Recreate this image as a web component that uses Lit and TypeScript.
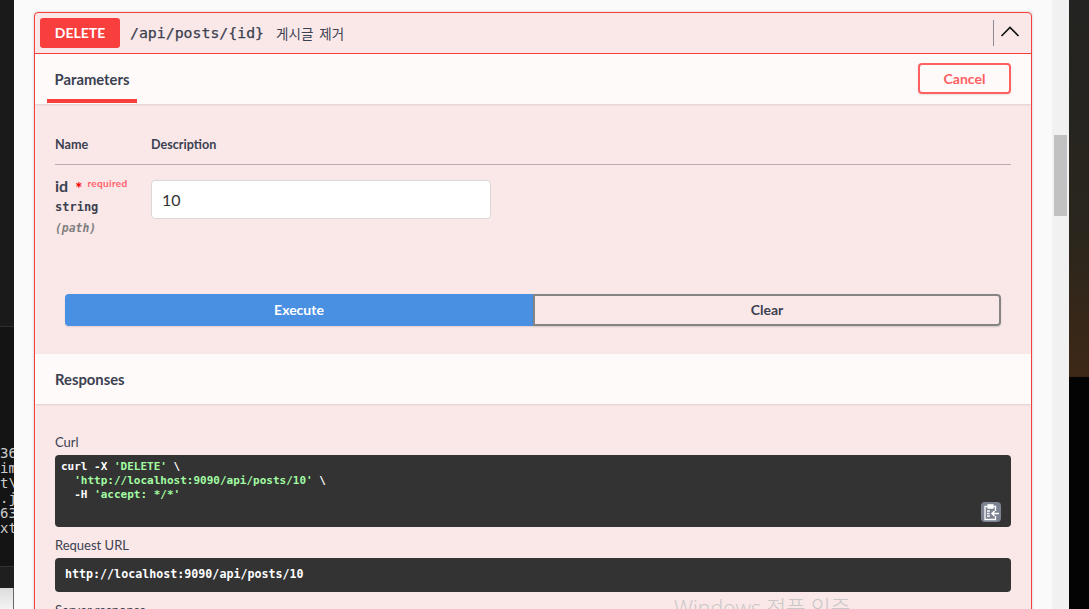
import { LitElement, html, css } from "lit";
import { customElement } from "lit/decorators.js";

@customElement("app-root")
export class AppRoot extends LitElement {
  static styles = css`
    :host { display: block; width: 1089px; height: 609px; overflow: hidden; position: relative; background: #fafafa; font-family: Lato, "Noto Sans CJK KR", sans-serif; color: #3b4151; }
    .shell { display: grid; grid-template-columns: 14px 1fr 17px 20px; grid-template-rows: 609px; height: 609px; }
    .term { background: #1a1a1a; position: relative; font: 14px/15px "DejaVu Sans Mono", monospace; color: #ccc; overflow: hidden; }
    .term .low { position: absolute; top: 326px; left: 0; right: 0; height: 240px; background: #141414; border-top: 1px solid #2e2e2e; box-sizing: border-box; }
    .term .lines { position: absolute; top: 446px; left: 0; white-space: pre; }
    .term .rule2 { position: absolute; top: 566px; left: 0; right: 0; height: 22px; background: #1f1f1f; border-top: 1px solid #333; box-sizing: border-box; }
    .term .foot { position: absolute; top: 588px; left: 0; right: 0; bottom: 0; background: linear-gradient(180deg, #dcdcdc, #f4f4f4); border-right: 1px solid #666; }
    .page { background: #fafafa; padding: 12px 20px 0 20px; min-width: 0; min-height: 0; }
    .track { background: #f1f1f1; position: relative; }
    .thumb { position: absolute; top: 135px; left: 2px; width: 13px; height: 81px; background: #c1c1c1; }
    .wall { background: linear-gradient(180deg, #232321 0%, #2a261d 38%, #3e2816 61.8%, #030303 62%); }
    .op { border: 1px solid #f93e3e; border-radius: 4px; background: #fae7e7; box-shadow: 0 0 3px rgba(0,0,0,.19); height: 640px; }
    .sum { display: flex; align-items: center; height: 40px; border-bottom: 1px solid #f93e3e; padding: 0 5px; }
    .method { width: 80px; height: 30px; border-radius: 3px; background: #f93e3e; color: #fff; font-size: 14px; font-weight: 700; line-height: 30px; text-align: center; }
    .path { margin-left: 10px; font: 400 14.85px "DejaVu Sans Mono", monospace; -webkit-text-stroke: .25px #3b4151; }
    .desc { margin-left: 12px; font: 13.5px "Noto Sans CJK KR", sans-serif; word-spacing: 3px; }
    .spacer { flex: 1; }
    .divider { width: 1px; height: 26px; background: #8a8a99; margin-right: 6px; }
    .chev { width: 20px; height: 20px; margin-right: 6px; display: block; }
    .tabbar { display: flex; justify-content: space-between; height: 50px; background: rgba(255,255,255,.8); box-shadow: 0 1px 2px rgba(0,0,0,.1); padding: 0 20px 0 12px; }
    .tab { width: 90px; height: 49px; border-bottom: 4px solid #f93e3e; box-sizing: border-box; text-align: center; font-size: 14.8px; font-weight: 700; line-height: 51px; }
    .cancel { width: 93px; height: 31px; margin-top: 9px; border: 2px solid #ff6060; border-radius: 4px; box-sizing: border-box; color: #ff6060; font-size: 14px; font-weight: 700; line-height: 27px; text-align: center; box-shadow: 0 1px 2px rgba(0,0,0,.1); }
    .params { padding: 0 20px; }
    .thead { display: grid; grid-template-columns: 96px 1fr; height: 60px; border-bottom: 1px solid rgba(59,65,81,.35); font-size: 12.6px; font-weight: 700; line-height: 20px; padding-top: 30px; box-sizing: border-box; margin-top: 1px; }
    .row { display: grid; grid-template-columns: 96px 340px; padding-top: 15px; height: 129px; box-sizing: border-box; }
    .pname { font-size: 16px; font-weight: 700; line-height: 12px; display: flex; align-items: baseline; }
    .star { color: #f00; font-size: 17px; margin-left: 7px; position: relative; top: 3px; }
    .req { color: #ff5f6d; font-size: 10px; font-weight: 700; margin-left: 5px; position: relative; top: -5px; letter-spacing: .35px; }
    .ptype { font: 700 12px/20px "DejaVu Sans Mono", monospace; margin-top: 3px; }
    .ploc { font: italic 700 11.4px/18px "DejaVu Sans Mono", monospace; color: #808080; margin-top: 2px; }
    .input { height: 39px; background: #fff; border: 1px solid #d9d9d9; border-radius: 4px; box-sizing: border-box; font-size: 16px; line-height: 37px; padding-left: 10px; color: #333; }
    .btns { display: grid; grid-template-columns: 1fr 1fr; margin: 0 30px; height: 30px; }
    .exec { background: #4990e2; color: #fff; font-size: 14px; font-weight: 700; line-height: 31px; text-align: center; border-radius: 4px 0 0 4px; box-shadow: 0 1px 2px rgba(0,0,0,.1); }
    .clear { border: 2px solid #858585; border-radius: 0 4px 4px 0; box-sizing: border-box; font-size: 14px; font-weight: 700; line-height: 28px; text-align: center; box-shadow: 0 1px 2px rgba(0,0,0,.15); }
    .resp-head { margin-top: 30px; height: 50px; background: rgba(255,255,255,.8); box-shadow: 0 1px 2px rgba(0,0,0,.1); padding-left: 20px; font-size: 14.8px; font-weight: 700; line-height: 51px; }
    .resp { padding: 30px 20px 0; }
    .label { font-size: 13px; line-height: 16px; }
    .code { background: #333; border-radius: 4px; color: #fff; font: 700 11px/14px "DejaVu Sans Mono", monospace; white-space: pre; position: relative; box-sizing: border-box; }
    .curl { height: 72px; padding: 5px 6px; margin-top: 5px; margin-bottom: 10px; }
    .url { height: 34px; padding: 0 10px; font-size: 11.66px; line-height: 33px; margin-top: 5px; margin-bottom: 10px; }
    .g { color: #a2fca2; }
    .copy { position: absolute; right: 10px; bottom: 5px; width: 20px; height: 20px; border-radius: 4px; background: #7d8293; display: flex; align-items: center; justify-content: center; }
    .wm { position: absolute; left: 674px; top: 591px; font: 300 21.3px "Open Sans", "Noto Sans CJK KR", sans-serif; color: #c8c8c8; white-space: nowrap; }
  `;

  render() {
    return html`
      <div class="shell">
        <div class="term">
          <div class="low"></div>
          <div class="lines">36
im
t\\
.j
63
xt</div>
          <div class="rule2"></div>
          <div class="foot"></div>
        </div>
        <div class="page">
          <div class="op">
            <div class="sum">
              <div class="method">DELETE</div>
              <div class="path">/api/posts/{id}</div>
              <div class="desc">게시글 제거</div>
              <div class="spacer"></div>
              <div class="divider"></div>
              <svg class="chev" viewBox="0 0 20 20" fill="none" stroke="#111" stroke-width="1.6"><path d="M1.5 13 L10 4.5 L18.5 13"/></svg>
            </div>
            <div class="tabbar">
              <div class="tab">Parameters</div>
              <div class="cancel">Cancel</div>
            </div>
            <div class="params">
              <div class="thead"><div>Name</div><div>Description</div></div>
              <div class="row">
                <div>
                  <div class="pname">id<span class="star">*</span><span class="req">required</span></div>
                  <div class="ptype">string</div>
                  <div class="ploc">(path)</div>
                </div>
                <div class="input">10</div>
              </div>
            </div>
            <div class="btns"><div class="exec">Execute</div><div class="clear">Clear</div></div>
            <div class="resp-head">Responses</div>
            <div class="resp">
              <div class="label">Curl</div>
              <div class="code curl">curl -X <span class="g">'DELETE'</span> \\
  <span class="g">'http://localhost:9090/api/posts/10'</span> \\
  -H <span class="g">'accept: */*'</span><span class="copy"><svg width="18" height="18" viewBox="0 0 18 18" fill="none" stroke="#fff" stroke-width="1.3"><path d="M13.5 8V3.5H11.5M5.5 3.5H3V16.5H13.5V13"/><path d="M6 1.8H11V5.2H6Z" fill="#fff"/><path d="M5 8H8M5 10.5H7.5M5 13H8"/><path d="M17 10.5H10M12.5 8L10 10.5L12.5 13" stroke-width="1.5"/></svg></span></div>
              <div class="label">Request URL</div>
              <div class="code url">http://localhost:9090/api/posts/10</div>
              <div class="label">Server response</div>
            </div>
          </div>
        </div>
        <div class="track"><div class="thumb"></div></div>
        <div class="wall"></div>
      </div>
      <div class="wm">Windows 정품 인증</div>
    `;
  }
}
